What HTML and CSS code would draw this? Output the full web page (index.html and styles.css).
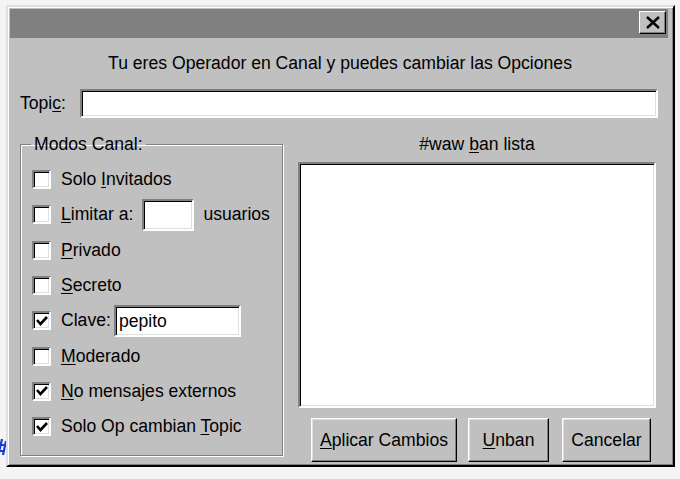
FILE: index.html
```html
<!DOCTYPE html>
<html lang="es">
<head>
	<meta charset="UTF-8">
	<title>Opciones de Canal</title>
	<link rel="stylesheet" href="styles.css">
</head>
<body>
<svg class="stray" width="8" height="18" viewBox="0 0 8 18"><path d="M4 0 L0 18 M8 2 L5 16 M0 6 L8 6 M0 12 L7 12" stroke="#1a3cd8" stroke-width="2.2" fill="none"/></svg>
<div class="window">
	<div class="titlebar">
		<div class="closebtn">
			<svg width="14" height="13" viewBox="0 0 14 13"><path d="M1 1 L13 12 M13 1 L1 12" stroke="#000" stroke-width="2.4" fill="none"/></svg>
		</div>
	</div>
	<div class="content">
		<div class="heading">Tu eres Operador en Canal y puedes cambiar las Opciones</div>
		<div class="topicrow">
			<span class="topiclabel">Topi<u>c</u>:</span>
			<div class="field topicfield"></div>
		</div>
		<div class="main">
			<fieldset class="group">
				<legend>Modos Canal:</legend>
				<div class="opt"><span class="chk"></span><span>Solo <u>I</u>nvitados</span></div>
				<div class="opt"><span class="chk"></span><span><u>L</u>imitar a:</span><div class="field limitfield"></div><span class="usuarios">usuarios</span></div>
				<div class="opt"><span class="chk"></span><span><u>P</u>rivado</span></div>
				<div class="opt"><span class="chk"></span><span><u>S</u>ecreto</span></div>
				<div class="opt"><span class="chk on"><svg width="14" height="14" viewBox="0 0 14 14"><path d="M2 6 L5.5 10 L12 3" stroke="#000" stroke-width="2.6" fill="none"/></svg></span><span>Clave:</span><div class="field clavefield">pepito</div></div>
				<div class="opt"><span class="chk"></span><span><u>M</u>oderado</span></div>
				<div class="opt"><span class="chk on"><svg width="14" height="14" viewBox="0 0 14 14"><path d="M2 6 L5.5 10 L12 3" stroke="#000" stroke-width="2.6" fill="none"/></svg></span><span><u>N</u>o mensajes externos</span></div>
				<div class="opt"><span class="chk on"><svg width="14" height="14" viewBox="0 0 14 14"><path d="M2 6 L5.5 10 L12 3" stroke="#000" stroke-width="2.6" fill="none"/></svg></span><span>Solo Op cambian <u>T</u>opic</span></div>
			</fieldset>
			<div class="banpanel">
				<div class="banlabel">#waw <u>b</u>an lista</div>
				<div class="field banlist"></div>
				<div class="buttons">
					<div class="btn btn-apply"><span><u>A</u>plicar Cambios</span></div>
					<div class="btn btn-unban"><span><u>U</u>nban</span></div>
					<div class="btn btn-cancel"><span>Cancelar</span></div>
				</div>
			</div>
		</div>
	</div>
</div>
</body>
</html>
```

FILE: styles.css
```css
*{
	margin: 0;
	padding: 0;
	box-sizing: border-box;
}
body{background:#f4f4f4; font-family:"Liberation Sans", Arial, sans-serif; font-size:17.6px; color:#000; position:relative; overflow:hidden; height:479px;}
u{text-decoration:underline; text-underline-offset:2px;}

.stray{position:absolute; left:-2px; top:439px;}

.window{margin:5px 0 0 6px; width:669px; height:462px; padding:2px; background:#c0c0c0; border:2px solid; border-color:#dfdfdf #000 #000 #dfdfdf; box-shadow:inset 1px 1px 0 #fff, inset -1px -1px 0 #808080;}
.titlebar{height:29px; margin-right:3px; background:#808080; display:flex; justify-content:flex-end; align-items:flex-start; padding:2px 2px 0 0;}
.closebtn{width:27px; height:23px; background:#c0c0c0; border:1px solid; border-color:#fff #000 #000 #fff; box-shadow:inset -1px -1px 0 #808080; display:flex; align-items:center; justify-content:center;}

.content{padding:0 13px 0 10px;}
.heading{height:50px; display:flex; align-items:center; justify-content:center; padding-left:2px;}

.topicrow{display:flex; align-items:center; height:29px; margin-top:1px;}
.topiclabel{width:60px;}
.field{background:#fff; border:2px solid; border-color:#808080 #fff #fff #808080; box-shadow:inset 1px 1px 0 #000, inset -1px -1px 0 #dfdfdf;}
.topicfield{width:578px; height:29px;}

.main{display:flex; gap:15px; margin-top:17px;}
.group{width:263px; height:321px; border:1px solid #808080; box-shadow:1px 1px 0 #fff, inset 1px 1px 0 #fff; padding:9px 0 0 11px;}
.group legend{padding:0 3px; margin-left:-1px; line-height:18px;}

.opt{height:35.3px; display:flex; align-items:center; gap:10px;}
.chk{width:19px; height:19px; flex:none; background:#fff; border:2px solid; border-color:#808080 #fff #fff #808080; box-shadow:inset 1px 1px 0 #000, inset -1px -1px 0 #dfdfdf; display:flex; align-items:center; justify-content:center;}
.limitfield{width:52px; height:32px; margin-left:-1px;}
.usuarios{margin-left:-1px;}
.clavefield{width:127px; height:32px; margin-left:-7px; padding:4px 0 0 3px;}

.banpanel{width:358px; display:flex; flex-direction:column;}
.banlabel{height:18px; line-height:18px; text-align:center; margin-bottom:9px;}
.banlist{height:246px;}
.buttons{display:flex; margin-top:10px; padding-left:13px;}
.btn{height:44px; background:#c0c0c0; border:1px solid; border-color:#fff #000 #000 #fff; box-shadow:inset -1px -1px 0 #808080, inset 1px 1px 0 #dfdfdf; display:flex; align-items:center; justify-content:center;}
.btn-apply{width:146px;}
.btn-unban{width:81px; margin-left:11px;}
.btn-cancel{width:89px; margin-left:13px;}
```
